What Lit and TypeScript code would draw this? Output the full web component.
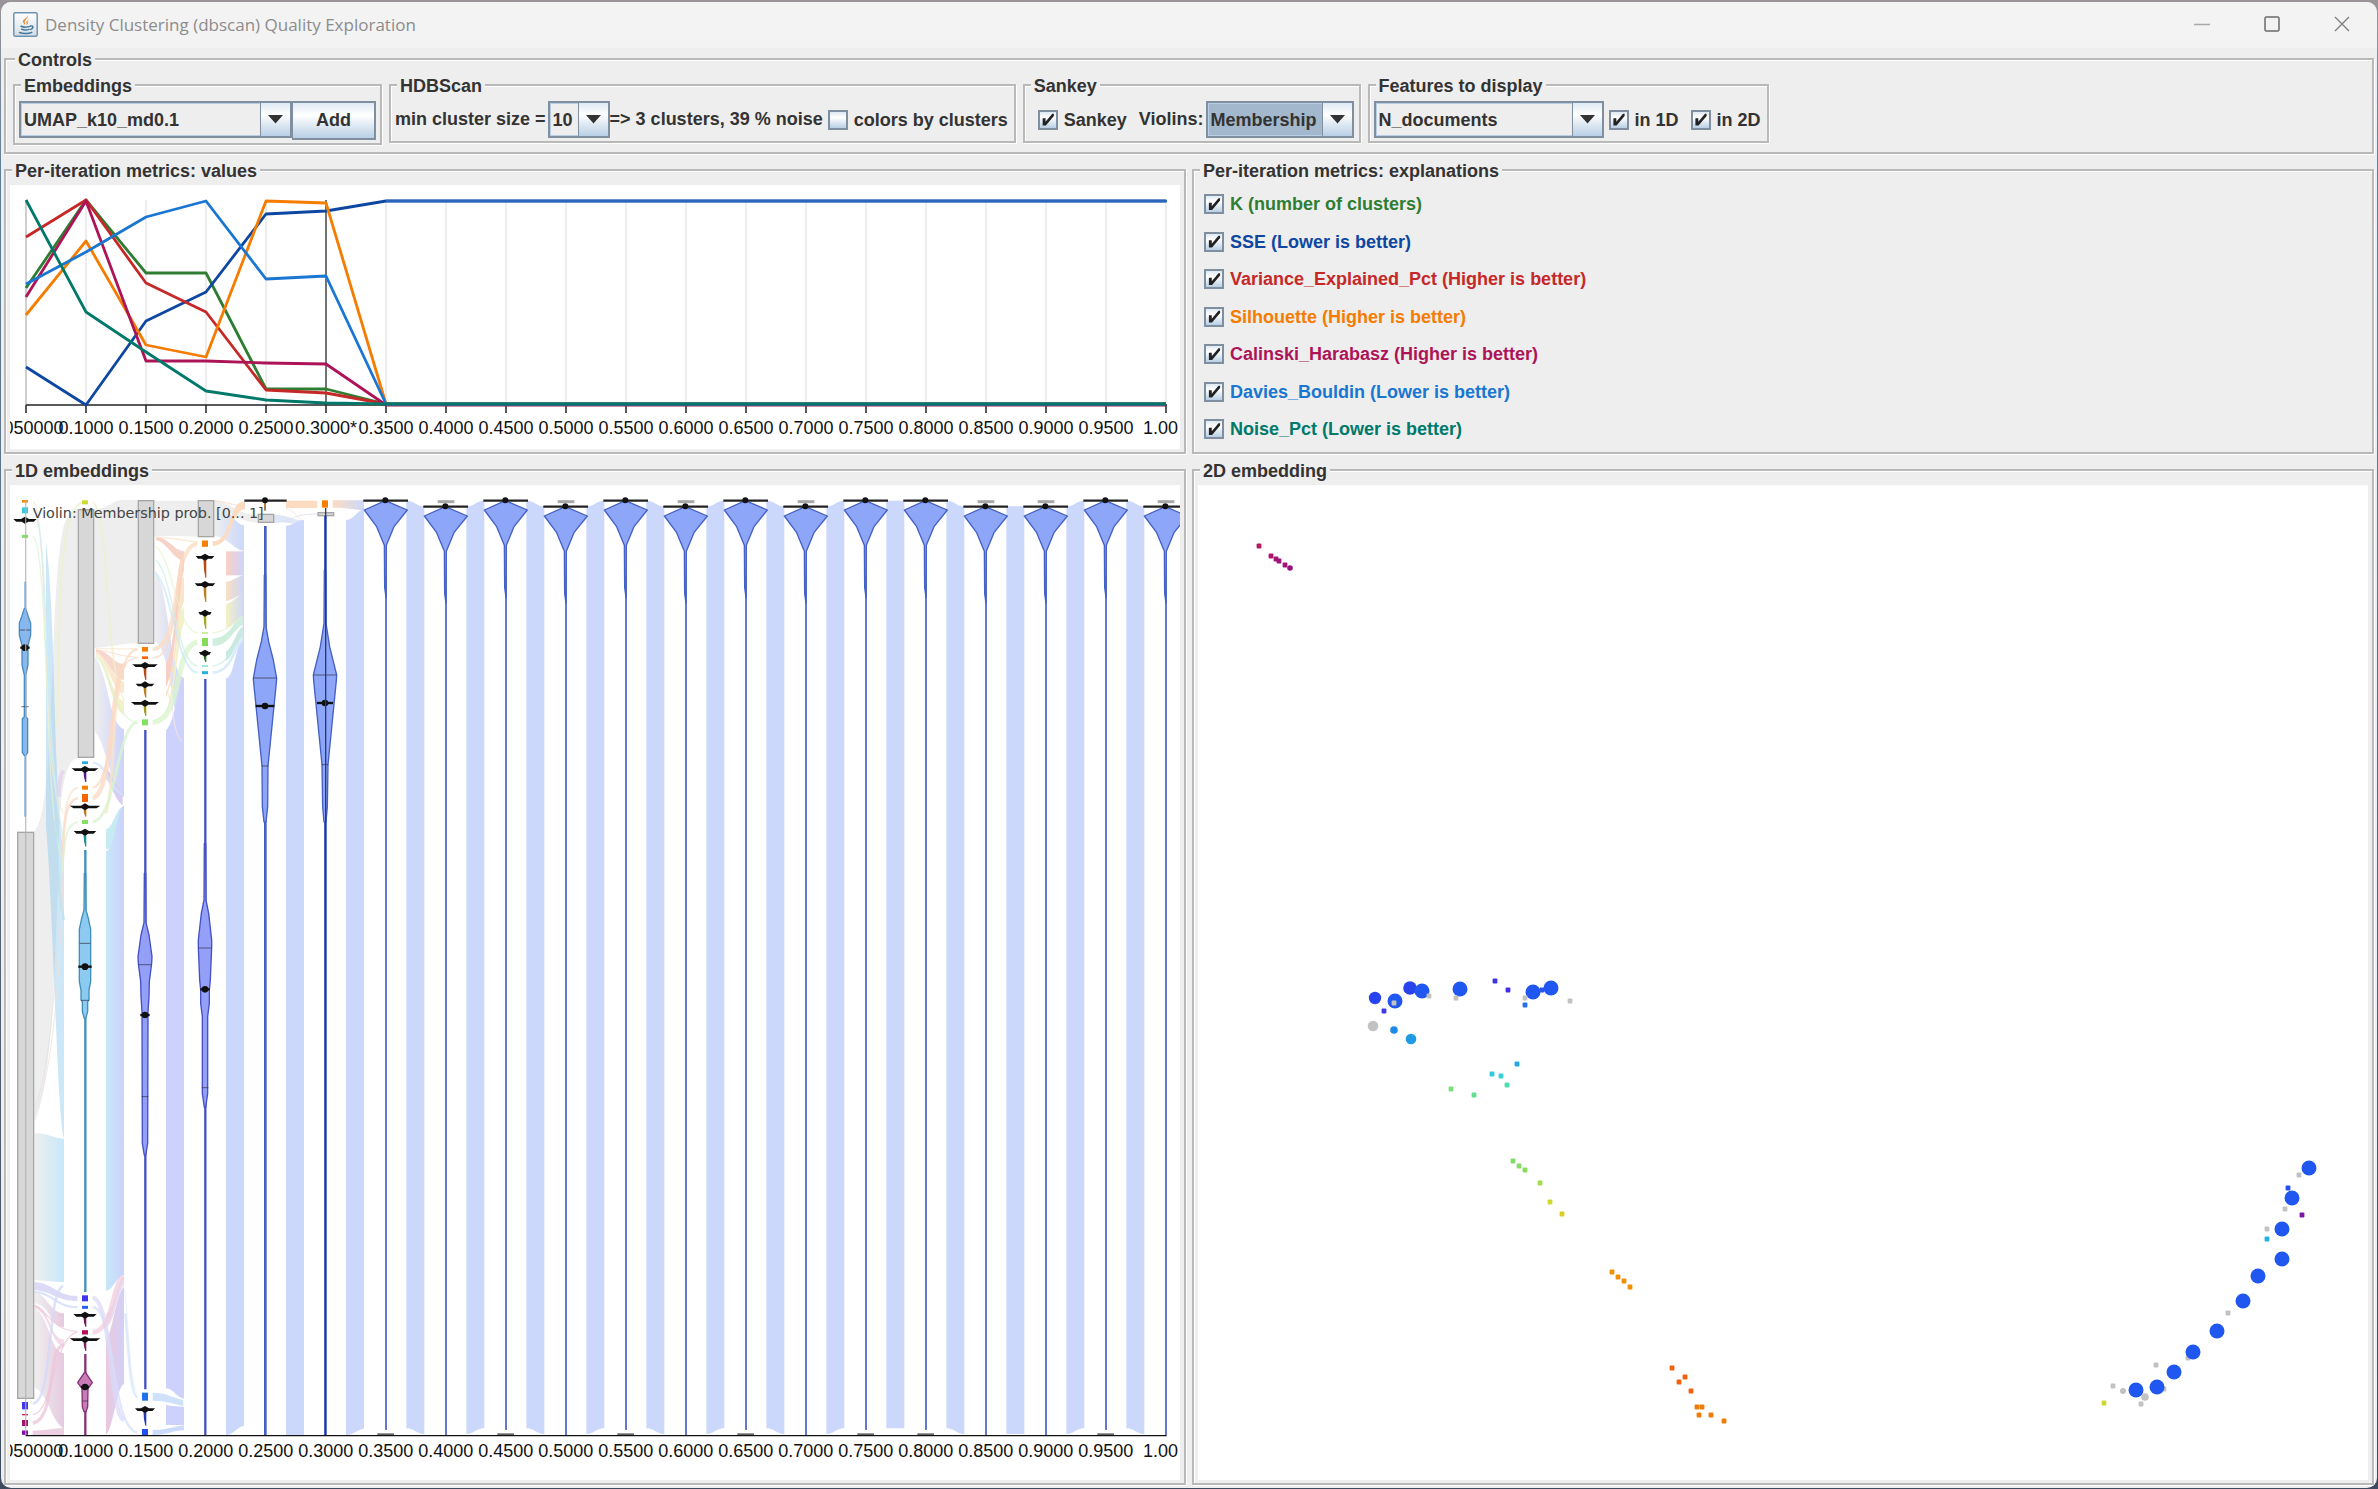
import { LitElement, html, svg, css } from "lit";
import { customElement, property } from "lit/decorators.js";

const LABELS = [
  "0.050000", "0.1000", "0.1500", "0.2000", "0.2500", "0.3000", "0.3500", "0.4000", "0.4500", "0.5000",
  "0.5500", "0.6000", "0.6500", "0.7000", "0.7500", "0.8000", "0.8500", "0.9000", "0.9500", "1.00",
];
const SELECTED = 5;

interface Metric {
  name: string;
  color: string;
  /* Pixel heights of the first iterations; the last one repeats to the end. */
  ys: number[];
}

const METRICS: Metric[] = [
  { name: "K (number of clusters)", color: "#2e7d32", ys: [103, 15, 88, 88, 204, 204, 219] },
  { name: "SSE (Lower is better)", color: "#0d47a1", ys: [182, 220, 136, 107, 29, 26, 16] },
  { name: "Variance_Explained_Pct (Higher is better)", color: "#c62828", ys: [52, 15, 98, 127, 205, 208, 219] },
  { name: "Silhouette (Higher is better)", color: "#f57c00", ys: [130, 56, 160, 172, 16, 18, 219] },
  { name: "Calinski_Harabasz (Higher is better)", color: "#ad1457", ys: [112, 16, 176, 176, 178, 179, 220] },
  { name: "Davies_Bouldin (Lower is better)", color: "#1976d2", ys: [99, 67, 32, 16, 94, 91, 219] },
  { name: "Noise_Pct (Lower is better)", color: "#00796b", ys: [15, 127, 167, 206, 215, 218, 219] },
];

const shared = css`
  * {
    box-sizing: border-box;
  }
  svg {
    display: block;
  }
  .box {
    min-width: 0;
    margin: 0;
    padding: 5px 4px 3px;
    border: 2px solid #b9b9b9;
    box-shadow: inset 1px 1px 0 #fff, 1px 1px 0 #fff;
  }
  .box > legend {
    margin-left: 2px;
    padding: 3px 3px 0;
    line-height: 19px;
    background: #eee;
  }
`;

@customElement("check-item")
export class CheckItem extends LitElement {
  @property() label = "";
  @property() color = "#333";
  @property({ type: Boolean }) checked = false;

  static styles = [
    shared,
    css`
      :host {
        display: block;
      }
      label {
        display: flex;
        align-items: center;
        gap: 6px;
        line-height: 22px;
        white-space: nowrap;
      }
      input {
        appearance: none;
        width: 20px;
        height: 20px;
        margin: 0;
        border: 2px solid #7f8f9f;
        background: linear-gradient(#dfe9f3, #fff 35%, #b8cfe5);
      }
      input:checked::before {
        content: "";
        display: block;
        width: 16px;
        height: 16px;
        background: #222;
        clip-path: polygon(18% 42%, 36% 42%, 36% 64%, 78% 14%, 88% 14%, 88% 28%, 38% 88%, 18% 88%);
      }
    `,
  ];

  render() {
    return html`<label style="color:${this.color}"
      ><input type="checkbox" .checked=${this.checked} />${this.label}</label
    >`;
  }
}

@customElement("combo-box")
export class ComboBox extends LitElement {
  @property() value = "";
  @property() label = "";
  @property({ type: Boolean, reflect: true }) active = false;

  static styles = [
    shared,
    css`
      :host {
        display: grid;
        grid-template-columns: 1fr 30px;
        height: 37px;
        border: 2px solid #7f8f9f;
        background: #eee;
      }
      select {
        grid-area: 1 / 1 / 2 / 3;
        appearance: none;
        width: 100%;
        height: 33px;
        margin: 0;
        padding: 0 30px 0 2px;
        border: 1px solid #b8cfe5;
        border-radius: 0;
        outline: none;
        background: transparent;
        color: #333;
        font: inherit;
      }
      :host([active]) select {
        background: #a3b8cc;
      }
      .arrow {
        grid-area: 1 / 2 / 2 / 3;
        display: grid;
        place-items: center;
        border-left: 1px solid #7f8f9f;
        background: linear-gradient(#dfe9f3, #fff 35%, #b8cfe5);
        pointer-events: none;
        z-index: 1;
      }
    `,
  ];

  render() {
    return html`
      <select aria-label=${this.label}>
        <option>${this.value}</option>
      </select>
      <span class="arrow">
        <svg width="15" height="9" viewBox="0 0 15 9"><path d="M0 0H15L7.5 8.500Z" fill="#333" /></svg>
      </span>
    `;
  }
}

@customElement("metrics-chart")
export class MetricsChart extends LitElement {
  static styles = [
    shared,
    css`
      :host {
        display: block;
        background: #fff;
      }
      svg {
        width: 100%;
      }
      text {
        font: 18px "Liberation Sans", sans-serif;
        fill: #111;
      }
    `,
  ];

  render() {
    const x = (i: number) => 16 + 60 * i;
    const line = (m: Metric) =>
      LABELS.map((_, i) => `${x(i)},${m.ys[Math.min(i, m.ys.length - 1)]}`).join(" ");
    return html`<svg viewBox="0 0 1170 264">
      ${LABELS.map(
        (_, i) => svg`<path d="M${x(i)} 15V220" stroke=${i === SELECTED ? "#444" : i === 0 ? "#bbb" : "#e6e6e6"} stroke-width=${i === SELECTED ? 1.5 : 1.4} />
          <path d="M${x(i)} 220v8" stroke="#222" stroke-width="1.5" />`,
      )}
      <path d="M16 220H1157" stroke="#222" stroke-width="1.5" />
      ${METRICS.map(
        (m) => svg`<polyline points=${line(m)} fill="none" stroke=${m.color} stroke-width="2.8" stroke-linejoin="round" />`,
      )}
      <path d="M376 16H1157" stroke="#2a66bd" stroke-width="2.4" />
      ${LABELS.map((label, i) =>
        i === LABELS.length - 1
          ? svg`<text x="1168" y="249" text-anchor="end">${label}</text>`
          : svg`<text x=${x(i)} y="249" text-anchor="middle">${label}${i === SELECTED ? "*" : ""}</text>`,
      )}
    </svg>`;
  }
}

type Pair = [number, number];

interface Violin {
  c: number;
  color: string;
  edge: string;
  stem: Pair;
  /* [y, half width] outline samples */
  shape: Pair[];
  quartiles: Pair[];
  dot: Pair;
}

const VIOLINS: Violin[] = [
  { c: 75, color: "#84b8f0", edge: "#4a8cc4", stem: [365, 1070],
    shape: [[445, 2], [470, 10], [490, 17], [525, 17], [556, 9], [615, 9], [645, 2], [770, 2], [776, 8], [878, 8], [886, 2]],
    quartiles: [[510, 16], [740, 11]], dot: [563, 14] },
  { c: 255, color: "#8ccaf2", edge: "#4090b8", stem: [1170, 2496],
    shape: [[1240, 2], [1350, 3], [1375, 10], [1408, 17], [1565, 17], [1590, 12], [1620, 12], [1625, 8], [1655, 8], [1676, 2]],
    quartiles: [[1450, 16], [1621, 12]], dot: [1520, 20] },
  { c: 255, color: "#c87cb6", edge: "#8a3078", stem: [2682, 2926],
    shape: [[2738, 2], [2768, 22], [2786, 9], [2840, 8], [2855, 3]],
    quartiles: [[2823, 9]], dot: [2781, 12] },
  { c: 435, color: "#94a0f8", edge: "#4450c4", stem: [810, 2788],
    shape: [[1240, 2], [1388, 3], [1425, 12], [1490, 21], [1510, 20], [1565, 13], [1610, 12], [1655, 9], [2050, 8], [2086, 2]],
    quartiles: [[1514, 19], [1910, 10]], dot: [1665, 14] },
  { c: 615, color: "#94a0f8", edge: "#4450c4", stem: [657, 2926],
    shape: [[1150, 2], [1320, 3], [1360, 11], [1440, 20], [1462, 20], [1560, 16], [1590, 13], [1630, 13], [1670, 8], [1900, 8], [1942, 2]],
    quartiles: [[1464, 19], [1883, 10]], dot: [1588, 14] },
  { c: 795, color: "#8da6f7", edge: "#4460c4", stem: [198, 2926],
    shape: [[345, 2], [500, 3], [545, 11], [600, 25], [655, 35], [668, 34], [918, 9], [1040, 8], [1086, 3]],
    quartiles: [[654, 34], [918, 10]], dot: [738, 28] },
  { c: 975, color: "#8da6f7", edge: "#4460c4", stem: [167, 2926],
    shape: [[330, 2], [490, 3], [560, 14], [645, 35], [662, 34], [914, 9], [1040, 7], [1086, 3]],
    quartiles: [[645, 34], [914, 10]], dot: [729, 24] },
];

/* Small clusters: centre x, y, half width, tail end, tail colour. */
const SLIM: [number, number, number, number, string][] = [
  [75, 181, 35, 181, "#111"],
  [255, 929, 40, 966, "#5a1890"],
  [255, 1041, 46, 1070, "#b87818"],
  [255, 1117, 34, 1160, "#209098"],
  [255, 2566, 35, 2600, "#701858"],
  [255, 2639, 46, 2673, "#802060"],
  [435, 617, 38, 660, "#b84818"],
  [435, 675, 28, 713, "#b88020"],
  [435, 730, 42, 768, "#a09818"],
  [435, 2849, 30, 2897, "#2838b0"],
  [615, 292, 28, 353, "#b84c18"],
  [615, 374, 31, 426, "#b88020"],
  [615, 460, 20, 507, "#a8a820"],
  [615, 580, 18, 606, "#287820"],
];

/* Square nodes: centre x, centre y, height, colour. */
const SQUARES: [number, number, number, string][] = [
  [75, 124, 8, "#f58a10"], [75, 151, 18, "#3cc8dc"], [75, 229, 9, "#84dc68"],
  [75, 2837, 22, "#4136ea"], [75, 2864, 4, "#c02860"], [75, 2889, 18, "#a01470"], [75, 2918, 13, "#8010a8"],
  [255, 127, 12, "#d0dc30"], [255, 908, 8, "#28a8e4"], [255, 983, 12, "#f58000"], [255, 1014, 24, "#f86400"],
  [255, 1086, 12, "#84e060"], [255, 2515, 18, "#4136f0"], [255, 2542, 9, "#2860f0"], [255, 2617, 13, "#b8105a"],
  [435, 568, 14, "#f58000"], [435, 593, 8, "#f86400"], [435, 787, 18, "#84e060"], [435, 2810, 24, "#2070f0"], [435, 2917, 20, "#2050f0"],
  [615, 251, 19, "#f58000"], [615, 519, 4, "#b0e470"], [615, 546, 24, "#84dc58"], [615, 618, 4, "#70dcc0"], [615, 638, 9, "#28b0e0"],
  [975, 132, 22, "#f58000"],
];

/* Noise nodes: x, y, width, height. */
const NOISE: [number, number, number, number][] = [
  [53, 1117, 48, 1698], [235, 149, 46, 743], [415, 122, 46, 428], [595, 122, 46, 108], [775, 163, 46, 24], [954, 158, 47, 9],
];

/* Sankey ribbons: fill and closed outline. */
const RIBBONS: [string, string][] = [
  ["#eee", "M104 1112C165 1060 150 400 185 230Q196 150 234 148V893C194 900 178 1000 176 1180C165 1650 145 1900 104 1985Z"],
  ["#8cc8f070", "M138 245C170 500 160 1050 192 1170V2035C172 1990 160 1350 138 1100Z"],
  ["url(#noiseCyan)", "M104 2020C150 2020 160 2036 192 2036V2466C160 2466 130 2462 104 2460Z"],
  ["#dcdaf6", "M104 2466C160 2470 170 2508 232 2508V2523C170 2523 160 2495 104 2490Z"],
  ["#dbe4fa", "M104 2492C160 2496 170 2538 232 2538V2545C170 2545 160 2505 104 2500Z"],
  ["url(#noisePink)", "M104 2498C140 2500 150 2560 192 2560V2602C150 2598 150 2535 104 2530Z"],
  ["#f3dce8", "M104 2535C150 2540 150 2640 192 2638V2660C150 2650 150 2560 104 2545Z"],
  ["url(#noisePink)", "M104 2545C150 2570 150 2680 192 2680V2906C150 2880 150 2810 104 2782Z"],
  ["#ecd0e2", "M98 2912C140 2910 160 2906 192 2903V2925H98Z"],
  ["#eee", "M283 148C330 146 330 120 372 120H414V550C372 548 330 562 283 564Z"],
  ["url(#noiseIndigo)", "M285 590C325 640 325 790 372 808V1010C335 1000 320 850 285 815Z"],
  ["#d8ccf2", "M318 925C345 950 350 985 368 1000V1036C345 1020 335 975 318 955Z"],
  ["#c6ebf2", "M318 1108C340 1102 348 1045 368 1040C355 1110 345 1165 318 1168Z"],
  ["url(#cyanIndigo)", "M318 1175C345 1165 348 1050 372 1036V2445C345 2455 340 2490 318 2492Z"],
  ["url(#pinkIndigo)", "M318 2640C340 2610 348 2500 372 2480V2772C350 2780 340 2905 318 2925Z"],
  ["#eadcf0", "M318 2562C345 2550 348 2470 372 2446V2475C350 2500 345 2590 318 2602Z"],
  ["#f8d8cc", "M288 568C330 575 340 612 372 612V660C335 652 320 590 288 575Z"],
  ["#fbe8d0", "M288 575C330 600 340 662 372 664V700C335 690 320 600 288 580Z"],
  ["#f4f0cc", "M288 580C330 610 335 720 372 722V765C330 745 325 610 288 585Z"],
  ["#eee", "M463 122H594V230C550 230 510 226 463 230Z"],
  ["url(#noiseIndigo)", "M465 330C510 400 505 630 552 655V845C520 800 510 560 465 545Z"],
  ["#f6d2c8", "M468 232C510 235 520 272 552 274V302C520 300 505 250 468 240Z"],
  ["#fbe4c8", "M498 700C535 620 525 380 552 348V425C535 450 530 640 498 715Z"],
  ["#f4f0c8", "M498 760C535 640 525 470 552 440V490C535 520 530 690 498 768Z"],
  ["#f8cfc2", "M498 610C535 560 520 300 552 282V330C535 380 525 640 498 682Z"],
  ["#ccd2fc", "M498 810C520 800 535 680 552 655V2816C530 2815 522 2786 498 2785Z"],
  ["#cfe0fb", "M458 2798C500 2798 520 2814 550 2820V2838C520 2832 500 2822 458 2822Z"],
  ["#ccd2fc", "M498 2835C520 2838 535 2840 552 2840V2895H498Z"],
  ["#ccdafb", "M458 2910C500 2910 520 2900 552 2896V2911C520 2912 500 2925 458 2925Z"],
  ["url(#noiseBlue)", "M642 125C680 130 700 193 732 196V272C700 270 685 232 642 228Z"],
  ["#eee", "M642 122C690 120 700 163 774 164V187C720 190 700 150 642 140Z"],
  ["url(#redBlue)", "M678 274H732V346H678Z"],
  ["url(#orangeBlue)", "M678 366C700 364 715 346 732 346V402C715 404 700 420 678 423Z"],
  ["url(#yellowBlue)", "M678 432C700 428 715 402 732 402V475C715 478 700 498 678 504Z"],
  ["#cfeedd", "M638 535C690 535 700 480 728 470V495C700 505 690 558 638 558Z"],
  ["#c8e8e0", "M678 575C700 560 710 510 728 500V530C710 540 700 590 678 602Z"],
  ["#ccd8fb", "M678 655C705 650 705 548 732 540V2898C710 2900 702 2925 678 2925Z"],
  ["#ccd8fb", "M728 272H732V545H728Z"],
  ["#fbdcc0", "M638 244C700 244 680 124 735 124V148C690 150 700 258 638 258Z"],
  ["#fbdcc0", "M858 122H952V144H858Z"],
  ["#dfe6f8", "M822 164C860 164 880 180 912 182L905 196C880 192 860 186 822 186Z"],
  ["#ccd8fb", "M858 197C880 197 890 181 912 180V2925H858Z"],
  ["url(#orangeToBlue)", "M998 121H1092V150C1060 150 1050 143 998 143Z"],
  ["#ccd8fb", "M1038 180C1065 180 1070 150 1092 148V2906C1070 2908 1062 2925 1038 2925Z"],
];

/* Thin strands: colour, width, path. */
const STRANDS: [string, number, string][] = [
  ["#fbe6d0", 4, "M98 124C150 150 120 1000 192 1060"],
  ["#cdeef4", 5, "M98 151C150 170 130 900 192 1140"],
  ["#ddf4d4", 4, "M98 229C150 250 130 1150 192 1200"],
  ["#e2d0ee", 12, "M176 1010C176 970 184 940 190 932"],
  ["#fad8c8", 8, "M190 1180C190 1060 205 1020 234 1014"],
  ["#fbe0c8", 5, "M186 1220C192 1040 200 990 234 983"],
  ["#dcf4d2", 6, "M186 1240C195 1120 200 1092 234 1086"],
  ["#bce0ee", 8, "M160 1080C175 1130 165 1260 192 1380"],
  ["#f2e0d8", 3, "M192 1130C185 1500 160 1850 104 1960"],
  ["#dde0e4", 3, "M186 1160C175 1500 150 1850 104 1940"],
  ["#d3dafa", 8, "M98 2830C160 2830 140 2490 190 2478"],
  ["#ecc6d8", 4, "M98 2864C160 2860 160 2630 232 2616"],
  ["#ecc6d8", 10, "M98 2889C170 2880 140 2660 192 2655"],
  ["#ecc6d8", 4, "M104 2536C150 2560 160 2612 232 2614"],
  ["#eef0c8", 6, "M246 127C170 150 180 500 172 800"],
  ["#eef0c8", 5, "M278 127C330 150 310 600 372 720"],
  ["#cde6fa", 7, "M278 908C320 908 330 990 368 1005"],
  ["#fbdcc0", 7, "M278 983C350 975 330 575 412 568"],
  ["#fcd8c4", 14, "M278 1014C345 1000 330 625 378 612"],
  ["#fcd8c4", 4, "M330 850C350 650 360 600 412 593"],
  ["#fbe4c8", 8, "M318 1060C350 950 330 690 372 675"],
  ["#d8f4cc", 9, "M278 1086C350 1075 350 795 412 787"],
  ["#fbe0c4", 3, "M288 566C340 566 360 568 412 566"],
  ["#fcd8c4", 3, "M288 570C340 575 360 590 412 592"],
  ["#d8f4cc", 4, "M288 590C330 620 340 780 412 788"],
  ["#dcd8f8", 13, "M278 2513C335 2520 330 2870 372 2880"],
  ["#d3dffb", 7, "M278 2541C350 2550 330 2900 412 2918"],
  ["#e6ecfc", 3, "M374 2490C388 2600 385 2750 412 2802"],
  ["#d3e4fb", 7, "M376 2560C386 2680 390 2800 412 2812"],
  ["#f0cedd", 14, "M278 2617C340 2612 335 2480 368 2450"],
  ["#fbdcc0", 12, "M458 568C550 560 510 258 592 251"],
  ["#fcd8c4", 5, "M458 593C540 600 520 330 552 290"],
  ["#fbe0c4", 4, "M470 232C530 232 550 244 592 246"],
  ["#d8f4cc", 16, "M458 787C550 780 520 560 592 546"],
  ["#e4f4c8", 4, "M468 260C520 300 530 510 592 519"],
  ["#cdeee4", 4, "M468 300C520 350 530 610 592 618"],
  ["#cde8f8", 6, "M468 340C520 400 530 630 592 638"],
  ["#f8e0e4", 4, "M498 690C530 740 510 800 545 845"],
  ["#e4f4d0", 4, "M638 519C680 515 700 490 728 468"],
  ["#cdeee4", 4, "M638 618C690 612 700 550 728 530"],
  ["#cde6fa", 8, "M638 638C700 632 700 560 728 536"],
  ["#f6d8c0", 3, "M642 122C690 125 700 140 735 135"],
  ["#d8dce8", 3, "M822 187C860 190 880 160 952 162"],
  ["#f6e0d0", 3, "M858 146C880 150 890 170 905 180"],
];

const GRADIENTS: [string, string, string][] = [
  ["noiseCyan", "#eeeeee", "#c6e8fa"],
  ["noisePink", "#eeeeee", "#e6cae0"],
  ["noiseIndigo", "#eeeeee", "#ccd2fc"],
  ["noiseBlue", "#eeeeee", "#ccd8fb"],
  ["cyanIndigo", "#c6e8f8", "#ccd2fc"],
  ["pinkIndigo", "#ecc8dc", "#d2d0f8"],
  ["redBlue", "#fbd0c4", "#ccd4fb"],
  ["orangeBlue", "#fae0c4", "#ccd6f8"],
  ["yellowBlue", "#f4f2c4", "#ccd8f8"],
  ["orangeToBlue", "#fbdcc0", "#ccd8fb"],
];

const RAISED = new Set([6, 8, 10, 12, 14, 15, 18]);

@customElement("violin-sankey")
export class ViolinSankey extends LitElement {
  static styles = [
    shared,
    css`
      :host {
        display: block;
        background: #fff;
      }
      svg {
        width: 100%;
      }
      .tick {
        font: 54px "Liberation Sans", sans-serif;
        fill: #111;
      }
      .caption {
        font: 43px "DejaVu Sans", sans-serif;
        fill: #444;
      }
    `,
  ];

  private violin(v: Violin) {
    const right = v.shape.map(([y, w]) => `${v.c + w},${y}`);
    const left = v.shape.map(([y, w]) => `${v.c - w},${y}`).reverse();
    return svg`
      <path d="M${v.c + 1} ${v.stem[0]}V${v.stem[1]}" stroke=${v.edge} stroke-width=${v.c > 700 ? 8 : v.c > 100 ? 7 : 5} />
      <polygon points=${[...right, ...left].join(" ")} fill=${v.color} stroke=${v.edge} stroke-width="4" stroke-linejoin="round" />
      ${v.quartiles.map(([y, w]) => svg`<path d="M${v.c - w} ${y}h${2 * w}" stroke="#334" stroke-width="3" opacity=".7" />`)}
      <path d="M${v.c - v.dot[1]} ${v.dot[0]}h${2 * v.dot[1]}" stroke="#111" stroke-width="7" />
      <circle cx=${v.c} cy=${v.dot[0]} r="10" fill="#111" />`;
  }

  private fullColumn(i: number) {
    const c = 76 + 180 * i;
    const raised = RAISED.has(i);
    const t = raised ? 122 : 140;
    return svg`
      <path d="M${c + 2} ${t + 130}V${raised ? 2910 : 2926}" stroke="#4460c4" stroke-width="5" />
      <polygon points="${c},${t} ${c + 66},${t + 28} ${c + 26},${t + 78} ${c + 3},${t + 134} ${c + 2},${t + 290} ${c - 2},${t + 260} ${c - 3},${t + 134} ${c - 26},${t + 78} ${c - 63},${t + 28}"
        fill="#8da6f7" stroke="#4460c4" stroke-width="4" stroke-linejoin="round" />
      <path d="M${c - 66} ${t}h134" stroke="#222" stroke-width="7" />
      <circle cx=${c} cy=${t - 1} r="9" fill="#111" />
      ${raised
        ? svg`<path d="M${c - 24} 2923h50" stroke="#666" stroke-width="6" />`
        : svg`<path d="M${c - 23} 125h50" stroke="#a8a8a8" stroke-width="9" />`}`;
  }

  private fullRibbon(i: number) {
    const x0 = 76 + 180 * i + 63;
    const x1 = x0 + 54;
    const top = (k: number) => (RAISED.has(k) ? 122 : 139);
    const end = (k: number) => (RAISED.has(k) ? 2905 : 2922);
    const a = top(i), b = top(i + 1), d = end(i), e = end(i + 1);
    return svg`<path fill="#ccd8fb" d="M${x0} ${a}C${x0 + 27} ${a} ${x1 - 27} ${b} ${x1} ${b}V${e}C${x1 - 27} ${e} ${x0 + 27} ${d} ${x0} ${d}Z" />`;
  }

  render() {
    const full = LABELS.map((_, i) => i).filter((i) => i >= 6);
    return html`<svg viewBox="30 75 3510 2985">
      <defs>
        ${GRADIENTS.map(
          ([id, from, to]) => svg`<linearGradient id=${id}><stop offset="0" stop-color=${from} /><stop offset="1" stop-color=${to} /></linearGradient>`,
        )}
      </defs>
      ${RIBBONS.map(([fill, d]) => svg`<path fill=${fill} d=${d} />`)}
      ${STRANDS.map(([stroke, w, d]) => svg`<path fill="none" stroke=${stroke} stroke-width=${w} opacity=".75" d=${d} />`)}
      ${full.slice(0, -1).map((i) => this.fullRibbon(i))}
      ${NOISE.map(([x, y, w, h]) => svg`<rect x=${x} y=${y} width=${w} height=${h} fill="#d7d7d7" stroke="#a6a6a6" stroke-width="4" />`)}
      ${SQUARES.map(([x, y, h, fill]) => svg`<rect x=${x - 9} y=${y - h / 2} width="18" height=${h} fill=${fill} />`)}
      ${VIOLINS.map((v) => this.violin(v))}
      ${SLIM.map(
        ([x, y, w, tail, color]) => svg`
          <path d="M${x - 5} ${y}L${x - 3} ${y + (tail - y) * 0.6}L${x + 1} ${tail}h3V${y}Z" fill=${color} />
          <path d="M${x - w} ${y - 4}H${x - 12}L${x} ${y - 11}L${x + 12} ${y - 4}H${x + w}L${x + w * 0.75} ${y + 4}H${x + 10}L${x} ${y + 10}L${x - 10} ${y + 4}H${x - w * 0.75}Z" fill="#111" />`,
      )}
      <path d="M795 122V152" stroke="#a86020" stroke-width="5" />
      <path d="M733 122h127" stroke="#222" stroke-width="7" />
      <circle cx="795" cy="121" r="9" fill="#111" />
      ${full.map((i) => this.fullColumn(i))}
      <path d="M77 120V2926" stroke="#b4b4b4" stroke-width="4" opacity=".8" />
      <path d="M977 144V2926" stroke="#233a80" stroke-width="4" />
      <path d="M77 2927H3500" stroke="#111" stroke-width="4" />
      <text class="caption" x="98" y="175">Violin: Membership prob. [0... 1]</text>
      ${LABELS.map((label, i) =>
        i === LABELS.length - 1
          ? svg`<text class="tick" x="3534" y="2992" text-anchor="end">${label}</text>`
          : svg`<text class="tick" x=${77 + 180 * i} y="2992" text-anchor="middle">${label}</text>`,
      )}
    </svg>`;
  }
}

/* Embedded points: x, y, radius, colour. */
const P = 2.4;
const BLUE = "#2057f0";
const GRAY = "#c2c2c2";
const POINTS: [number, number, number, string][] = [
  [1259, 546, P, "#b81860"], [1271, 556, P, "#b01468"], [1276, 559, P, "#a01478"], [1279, 561, P, "#a01478"], [1285, 565, P, "#a01478"], [1290, 568, 2.8, "#981080"],
  [1373, 1026, 5.3, GRAY], [1375, 998, 6.2, "#2843ee"], [1410, 988, 6.8, "#2843ee"],
  [1395, 1001, 7.5, BLUE], [1422, 991, 7.5, BLUE], [1460, 989, 7.5, BLUE], [1533, 992, 7.5, BLUE], [1551, 988, 7.5, BLUE],
  [1394, 1030, 3.8, "#1e88ea"], [1411, 1039, 5.3, "#1f9be6"],
  [1495, 981, P, "#3e32e8"], [1508, 990, P, "#4030e8"], [1384, 1011, P, "#4136ea"], [1542, 990, P, "#2b55ef"], [1525, 1005, P, "#2570ee"],
  [1394, 1003, P, GRAY], [1429, 996, P, GRAY], [1456, 998, P, GRAY], [1525, 998, P, GRAY], [1570, 1001, P, GRAY],
  [1517, 1064, P, "#20a8e4"], [1492, 1074, P, "#30c8dc"], [1501, 1076, P, "#38cedb"], [1507, 1085, P, "#50dcb0"], [1474, 1095, P, "#60e090"], [1451, 1089, P, "#7be07b"],
  [1513, 1161, P, "#84dc68"], [1519, 1166, P, "#84dc68"], [1525, 1170, P, "#84dc58"], [1540, 1183, P, "#a0dc50"], [1550, 1202, P, "#d0d830"], [1562, 1214, P, "#dccc20"],
  [1612, 1272, P, "#f09000"], [1618, 1277, P, "#f09000"], [1624, 1281, P, "#f09000"], [1630, 1287, P, "#f09000"],
  [1672, 1368, P, "#f4600c"], [1679, 1382, P, "#f4600c"], [1685, 1377, P, "#f4600c"], [1691, 1391, P, "#f4600c"],
  [1697, 1407, P, "#f07c08"], [1702, 1407, P, "#f07c08"], [1699, 1415, P, "#f07c08"], [1711, 1415, P, "#f07c08"], [1724, 1421, P, "#f07c08"],
  [2299, 1175, P, GRAY], [2285, 1209, P, GRAY], [2267, 1229, P, GRAY], [2228, 1313, P, GRAY], [2188, 1358, P, GRAY], [2156, 1365, P, GRAY],
  [2113, 1386, P, GRAY], [2123, 1391, 3, GRAY], [2145, 1397, 3.8, GRAY], [2141, 1404, P, GRAY], [2164, 1389, P, GRAY],
  [2309, 1168, 7.5, BLUE], [2292, 1198, 7.5, BLUE], [2282, 1229, 7.5, BLUE], [2282, 1259, 7.5, BLUE], [2258, 1276, 7.5, BLUE], [2243, 1301, 7.5, BLUE],
  [2217, 1331, 7.5, BLUE], [2193, 1352, 7.5, BLUE], [2174, 1372, 7.5, BLUE], [2157, 1387, 7.5, BLUE], [2136, 1390, 7.5, BLUE],
  [2288, 1188, P, "#2450f0"], [2302, 1215, P, "#7a18a8"], [2267, 1239, P, "#20b0e4"], [2104, 1403, P, "#ccd830"],
];

@customElement("embedding-scatter")
export class EmbeddingScatter extends LitElement {
  static styles = [
    shared,
    css`
      :host {
        display: block;
        background: #fff;
      }
      svg {
        width: 100%;
      }
    `,
  ];

  render() {
    return html`<svg viewBox="1198 485 1170 995">
      ${POINTS.map(([x, y, r, fill]) =>
        r === P
          ? svg`<rect x=${x - r} y=${y - r} width=${2 * r} height=${2 * r} rx="1" fill=${fill} />`
          : svg`<circle cx=${x} cy=${y} r=${r} fill=${fill} />`,
      )}
    </svg>`;
  }
}

@customElement("app-root")
export class AppRoot extends LitElement {
  static styles = [
    shared,
    css`
      :host {
        display: block;
        min-height: 100vh;
        padding: 2px 1px;
        background: linear-gradient(#9a9499, #5b7f99 12%, #5c6c7c 50%, #3b4a5e);
        color: #333;
        font: bold 18px "Liberation Sans", Arial, sans-serif;
      }
      .window {
        display: flex;
        flex-direction: column;
        border-radius: 10px;
        background: #eee;
        overflow: hidden;
      }
      .titlebar {
        display: flex;
        align-items: center;
        height: 46px;
        padding: 0 0 2px 12px;
        background: #f3f3f3;
      }
      .title {
        flex: 1;
        margin: 0;
        padding-left: 7px;
        color: #8c8c8c;
        font: 17px "Open Sans", "Noto Sans", sans-serif;
      }
      .caption-button {
        display: grid;
        place-items: center;
        width: 70px;
        height: 44px;
        padding: 0;
        border: 0;
        background: none;
      }
      .body {
        display: grid;
        gap: 5px;
        padding: 0 3px 3px;
      }
      .controls {
        display: flex;
        flex-wrap: wrap;
        align-items: flex-start;
        gap: 7px;
        padding: 4px 7px 7px;
      }
      .row {
        display: flex;
        align-items: center;
        white-space: nowrap;
      }
      .top {
        align-items: flex-start;
      }
      .hdb {
        padding-right: 6px;
      }
      .sankey {
        padding: 5px 5px 3px 13px;
      }
      .sankey > legend {
        margin-left: -7px;
      }
      .features {
        padding-right: 6px;
      }
      .add {
        width: 84px;
        height: 39px;
        padding: 0;
        border: 2px solid #7f8f9f;
        border-left-width: 1px;
        background: linear-gradient(#dfe9f3, #fff 35%, #b8cfe5);
        color: #333;
        font: inherit;
      }
      .w-embed {
        width: 273px;
      }
      .w-size {
        width: 62px;
        margin-left: 2px;
      }
      .w-violin {
        width: 148px;
        margin-left: 2px;
      }
      .w-feature {
        width: 230px;
      }
      .after {
        margin-left: 5px;
      }
      .gap {
        margin-left: 12px;
      }
      .panels {
        display: grid;
        grid-template-columns: 1fr 1fr;
        gap: 5px 6px;
      }
      .panel {
        padding: 4px 4px 3px;
      }
      .metrics {
        display: flex;
        flex-direction: column;
        justify-content: space-between;
        min-height: 255px;
        padding: 8px 6px 0;
      }
    `,
  ];

  render() {
    return html`
      <main class="window">
        <header class="titlebar">
          <svg width="25" height="25" viewBox="0 0 25 25">
            <defs>
              <linearGradient id="tile" x2="0" y2="1"><stop offset="0" stop-color="#fff" /><stop offset="1" stop-color="#d4dde6" /></linearGradient>
            </defs>
            <rect x=".8" y=".8" width="23.4" height="23.4" rx="1.500" fill="url(#tile)" stroke="#6f93ae" stroke-width="1.500" />
            <path d="M14.500 3C15 6 9.500 7 10 9.800C10.200 11 11.500 12 12 13C12.500 11.500 11.300 10.600 11.700 9.300C12.300 7.500 15.500 6 14.500 3Z" fill="#e8862c" />
            <path d="M16.500 7.200C14 8 12.900 9.400 13.500 10.700C13.900 11.600 13.900 12.300 13.200 13.100C15.300 12.200 15.200 10.900 14.600 10C14 9 15 8 16.500 7.200Z" fill="#e8862c" />
            <path d="M8 14.300C10 15.200 14.500 15.200 17 14.400M8.700 17.300C11 18.200 14 18.100 16 17.400M6.500 20.500C10 22 16 21.800 18.800 20.300M17.800 14C20.800 13.200 20.600 16.600 17.600 17.400" fill="none" stroke="#46779c" stroke-width="1.500" stroke-linecap="round" />
          </svg>
          <h1 class="title">Density Clustering (dbscan) Quality Exploration</h1>
          <button class="caption-button" aria-label="Minimize">
            <svg width="16" height="16" viewBox="0 0 16 16"><path d="M0 8.500H16" stroke="#a8a8a8" stroke-width="1.300" /></svg>
          </button>
          <button class="caption-button" aria-label="Maximize">
            <svg width="16" height="16" viewBox="0 0 16 16"><rect x="1" y="1" width="14" height="14" rx="1.500" fill="none" stroke="#6a6a6a" stroke-width="1.500" /></svg>
          </button>
          <button class="caption-button" aria-label="Close">
            <svg width="16" height="16" viewBox="0 0 16 16"><path d="M1 1L15 15M15 1L1 15" stroke="#808080" stroke-width="1.400" /></svg>
          </button>
        </header>

        <div class="body">
          <fieldset class="box controls">
            <legend>Controls</legend>
            <fieldset class="box">
              <legend>Embeddings</legend>
              <div class="row top">
                <combo-box class="w-embed" label="Embedding" value="UMAP_k10_md0.1"></combo-box>
                <button class="add">Add</button>
              </div>
            </fieldset>
            <fieldset class="box hdb">
              <legend>HDBScan</legend>
              <div class="row">
                <span>min cluster size =</span>
                <combo-box class="w-size" label="min cluster size" value="10"></combo-box>
                <span>=&gt; 3 clusters, 39 % noise</span>
                <check-item class="after" label="colors by clusters"></check-item>
              </div>
            </fieldset>
            <fieldset class="box sankey">
              <legend>Sankey</legend>
              <div class="row">
                <check-item label="Sankey" checked></check-item>
                <span class="gap">Violins:</span>
                <combo-box class="w-violin" label="Violins" value="Membership" active></combo-box>
              </div>
            </fieldset>
            <fieldset class="box features">
              <legend>Features to display</legend>
              <div class="row">
                <combo-box class="w-feature" label="Feature" value="N_documents"></combo-box>
                <check-item class="after" label="in 1D" checked></check-item>
                <check-item class="gap" label="in 2D" checked></check-item>
              </div>
            </fieldset>
          </fieldset>

          <div class="panels">
            <fieldset class="box panel">
              <legend>Per-iteration metrics: values</legend>
              <metrics-chart></metrics-chart>
            </fieldset>
            <fieldset class="box panel">
              <legend>Per-iteration metrics: explanations</legend>
              <div class="metrics">
                ${METRICS.map((m) => html`<check-item label=${m.name} color=${m.color} checked></check-item>`)}
              </div>
            </fieldset>
            <fieldset class="box panel">
              <legend>1D embeddings</legend>
              <violin-sankey></violin-sankey>
            </fieldset>
            <fieldset class="box panel">
              <legend>2D embedding</legend>
              <embedding-scatter></embedding-scatter>
            </fieldset>
          </div>
        </div>
      </main>
    `;
  }
}
